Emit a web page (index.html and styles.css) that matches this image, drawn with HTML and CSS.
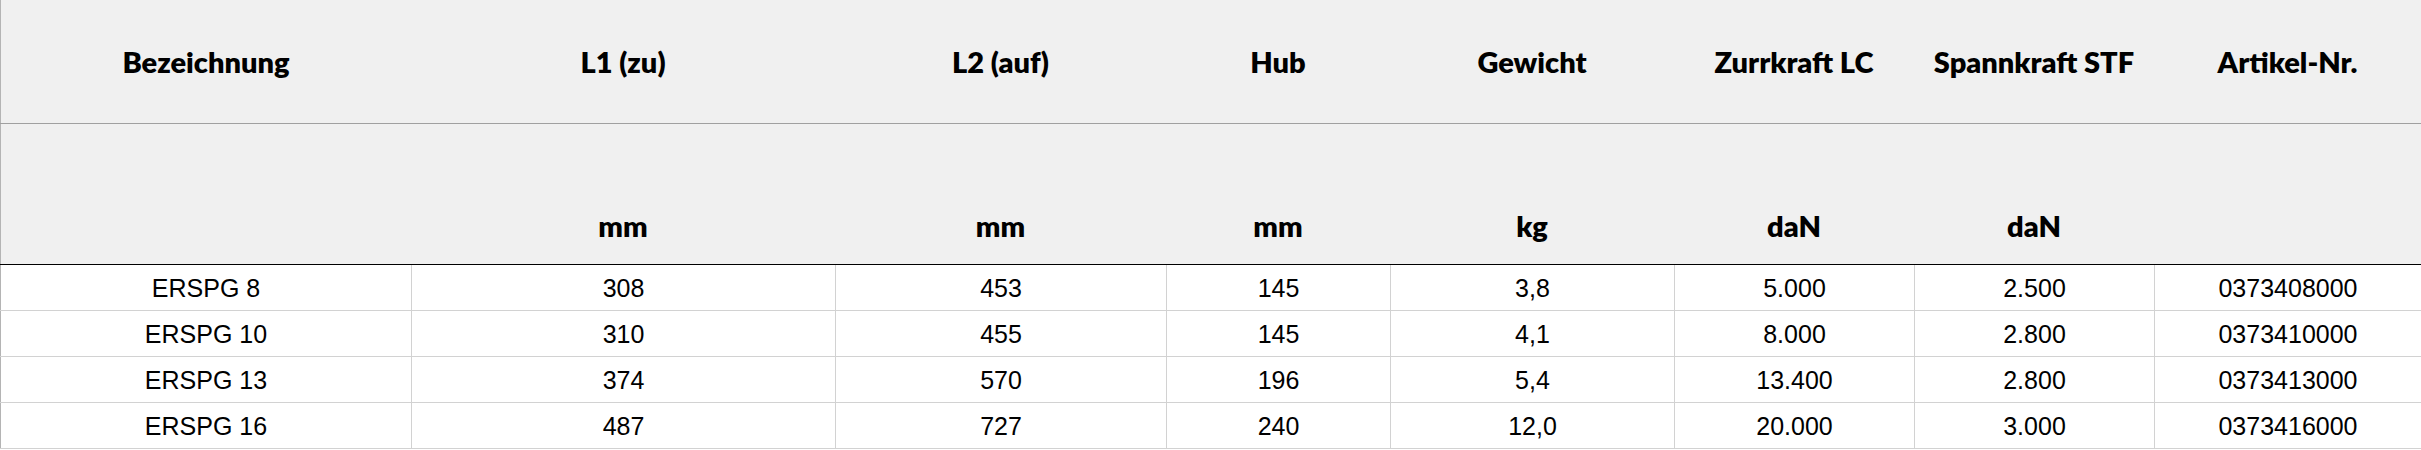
FILE: index.html
```html
<!DOCTYPE html>
<html lang="de">
<head>
<meta charset="utf-8">
<title>ERSPG Tabelle</title>
<link rel="stylesheet" href="styles.css">
</head>
<body>
<div class="spec" role="table">
  <div class="row head-names" role="row">
    <div class="hc" role="columnheader">Bezeichnung</div>
    <div class="hc" role="columnheader">L1 (zu)</div>
    <div class="hc" role="columnheader">L2 (auf)</div>
    <div class="hc" role="columnheader">Hub</div>
    <div class="hc" role="columnheader">Gewicht</div>
    <div class="hc" role="columnheader">Zurrkraft LC</div>
    <div class="hc" role="columnheader">Spannkraft STF</div>
    <div class="hc" role="columnheader">Artikel-Nr.</div>
  </div>
  <div class="row head-units" role="row">
    <div class="hc" role="columnheader"></div>
    <div class="hc" role="columnheader">mm</div>
    <div class="hc" role="columnheader">mm</div>
    <div class="hc" role="columnheader">mm</div>
    <div class="hc" role="columnheader">kg</div>
    <div class="hc" role="columnheader">daN</div>
    <div class="hc" role="columnheader">daN</div>
    <div class="hc" role="columnheader"></div>
  </div>
  <div class="row data" role="row">
    <div class="dc" role="cell">ERSPG 8</div><div class="dc" role="cell">308</div><div class="dc" role="cell">453</div><div class="dc" role="cell">145</div><div class="dc" role="cell">3,8</div><div class="dc" role="cell">5.000</div><div class="dc" role="cell">2.500</div><div class="dc" role="cell">0373408000</div>
  </div>
  <div class="row data" role="row">
    <div class="dc" role="cell">ERSPG 10</div><div class="dc" role="cell">310</div><div class="dc" role="cell">455</div><div class="dc" role="cell">145</div><div class="dc" role="cell">4,1</div><div class="dc" role="cell">8.000</div><div class="dc" role="cell">2.800</div><div class="dc" role="cell">0373410000</div>
  </div>
  <div class="row data" role="row">
    <div class="dc" role="cell">ERSPG 13</div><div class="dc" role="cell">374</div><div class="dc" role="cell">570</div><div class="dc" role="cell">196</div><div class="dc" role="cell">5,4</div><div class="dc" role="cell">13.400</div><div class="dc" role="cell">2.800</div><div class="dc" role="cell">0373413000</div>
  </div>
  <div class="row data" role="row">
    <div class="dc" role="cell">ERSPG 16</div><div class="dc" role="cell">487</div><div class="dc" role="cell">727</div><div class="dc" role="cell">240</div><div class="dc" role="cell">12,0</div><div class="dc" role="cell">20.000</div><div class="dc" role="cell">3.000</div><div class="dc" role="cell">0373416000</div>
  </div>
</div>
</body>
</html>
```

FILE: styles.css
```css
html, body {
  margin: 0;
  padding: 0;
  background: #ffffff;
}

*, *::before, *::after {
  box-sizing: border-box;
}

.spec {
  width: 2421px;
  display: flex;
  flex-direction: column;
  color: #000;
}

.row {
  display: grid;
  grid-template-columns: 411px 424px 331px 224px 284px 240px 240px 267px;
}

.head-names,
.head-units {
  background: #f0f0f0;
  font-family: "Lato", "Open Sans", sans-serif;
  font-weight: 800;
  font-size: 29px;
  line-height: 34px;
}

.head-names {
  height: 124px;
  border-bottom: 1px solid #a0a0a0;
}

.head-units {
  height: 141px;
  border-bottom: 1px solid #000;
}

.hc {
  display: flex;
  justify-content: center;
  align-items: center;
}

.head-units .hc {
  align-items: flex-end;
  padding-bottom: 21px;
}

.hc:first-child {
  border-left: 1px solid #b4b4b4;
}

.data {
  height: 46px;
  border-bottom: 1px solid #d2d2d2;
  font-family: "Liberation Sans", Arial, sans-serif;
  font-size: 25px;
  line-height: 30px;
}

.dc {
  display: flex;
  align-items: center;
  justify-content: center;
  border-left: 1px solid #d2d2d2;
}

.dc:first-child {
  border-left-color: #b4b4b4;
}
```
